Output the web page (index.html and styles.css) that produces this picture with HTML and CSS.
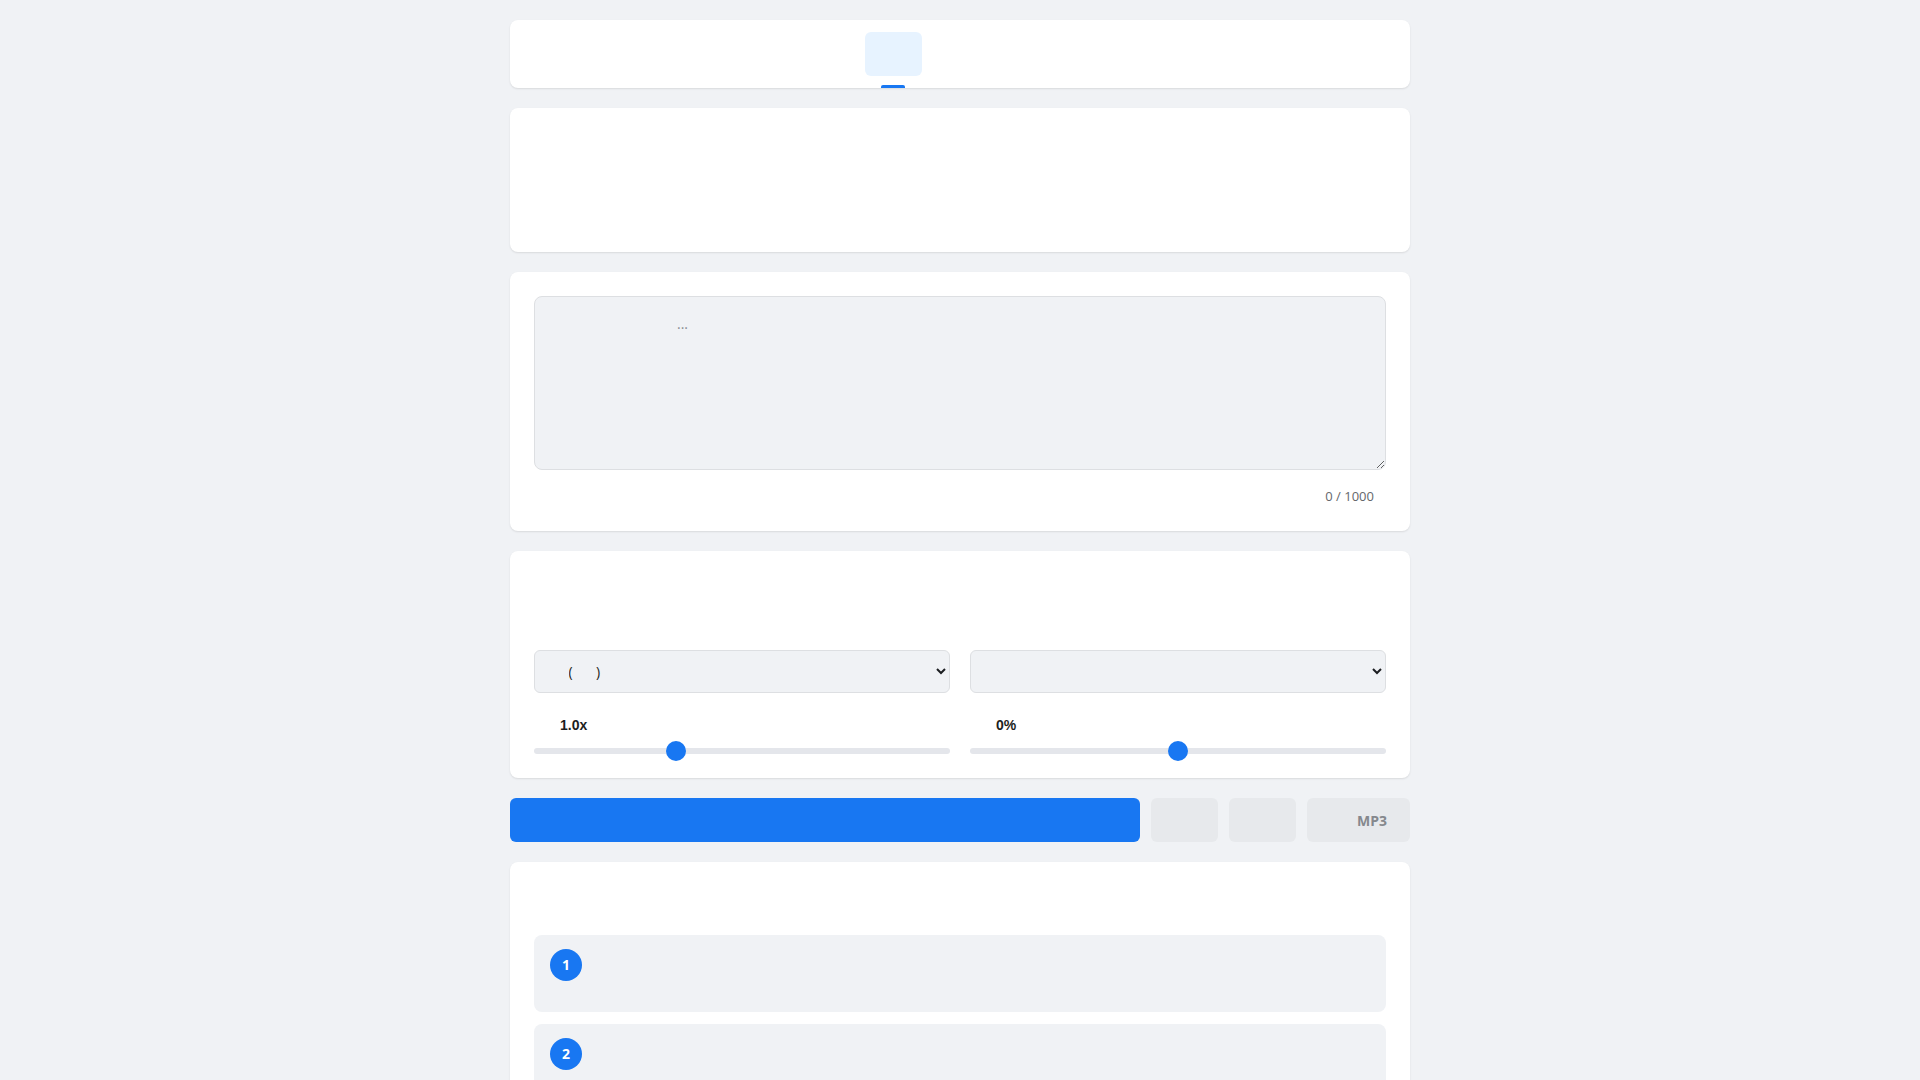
FILE: index.html
```html
<!DOCTYPE html>
<html lang="zh-CN">
<head>
    <meta charset="UTF-8">
    <meta name="viewport" content="width=device-width, initial-scale=1.0">
    <title>文字转语音</title>
    <link rel="stylesheet" href="styles.css">
</head>
<body>
    <div class="page">
        <div class="card tabs_card">
            <ul class="tabs">
                <li class="tab active"><span class="tab_box">　　</span><i class="tab_bar"></i></li>
                <li class="tab"><span class="tab_box">　　</span><i class="tab_bar"></i></li>
                <li class="tab"><span class="tab_box">　　</span><i class="tab_bar"></i></li>
            </ul>
        </div>

        <div class="card intro">
            <h2 class="title">　　　　</h2>
            <p class="desc">　　　　　　　　　　　　<br>　　　　　　　　</p>
        </div>

        <div class="card">
            <textarea class="text_input" id="textInput" maxlength="1000" placeholder="　　　　　　　　　..."></textarea>
            <div class="counter"><span id="count">0</span> / 1000</div>
        </div>

        <div class="card settings">
            <h2 class="title">　　　　</h2>
            <div class="grid">
                <div class="field">
                    <label class="field_label" for="voice">　　</label>
                    <select id="voice" class="select">
                        <option>(&emsp;&ensp;&#8198;)</option>
                    </select>
                </div>
                <div class="field">
                    <label class="field_label" for="style">　　</label>
                    <select id="style" class="select">
                        <option></option>
                    </select>
                </div>
                <div class="field">
                    <p class="range_label"><span class="range_name">　　</span><b id="rateVal">1.0x</b></p>
                    <input type="range" class="range" id="rate" min="0.5" max="2" step="0.1" value="1">
                </div>
                <div class="field">
                    <p class="range_label"><span class="range_name">　　</span><b id="pitchVal">0%</b></p>
                    <input type="range" class="range" id="pitch" min="-50" max="50" step="1" value="0">
                </div>
            </div>
        </div>

        <div class="actions">
            <button class="btn btn_primary">　　　　</button>
            <button class="btn btn_gray">　　</button>
            <button class="btn btn_gray">　　</button>
            <button class="btn btn_gray btn_mp3">　　 MP3</button>
        </div>

        <div class="card history">
            <h2 class="title">　　　　</h2>
            <ul class="steps">
                <li class="step">
                    <span class="step_num">1</span>
                    <div class="step_text">
                        <p class="step_title">　　　　</p>
                        <p class="step_desc">　　　　　　　　</p>
                    </div>
                </li>
                <li class="step">
                    <span class="step_num">2</span>
                    <div class="step_text">
                        <p class="step_title">　　　　</p>
                        <p class="step_desc">　　　　　　　　</p>
                    </div>
                </li>
                <li class="step">
                    <span class="step_num">3</span>
                    <div class="step_text">
                        <p class="step_title">　　　　</p>
                        <p class="step_desc">　　　　　　　　</p>
                    </div>
                </li>
            </ul>
        </div>
    </div>
    <script>
        {
            let text = document.querySelector('#textInput');
            let count = document.querySelector('#count');
            let rate = document.querySelector('#rate');
            let pitch = document.querySelector('#pitch');
            text.oninput = function () {
                count.innerHTML = this.value.length;
            }
            rate.oninput = function () {
                document.querySelector('#rateVal').innerHTML = Number(this.value).toFixed(1) + 'x';
            }
            pitch.oninput = function () {
                document.querySelector('#pitchVal').innerHTML = this.value + '%';
            }
        }
    </script>
</body>
</html>
```

FILE: styles.css
```css
body{
    margin: 0;
    background: #f0f2f5;
    font-family: "Open Sans", "Noto Sans", sans-serif;
    font-size: 14px;
    color: #1c1e21;
}
ul{
    list-style: none;
    margin: 0;
    padding: 0;
}
p{
    margin: 0;
}
.page{
    width: 900px;
    margin: 0 auto;
    padding: 20px 0;
}
.card{
    background: #fff;
    border-radius: 8px;
    box-shadow: 0 1px 2px rgba(0, 0, 0, 0.1);
    padding: 24px;
    margin-bottom: 20px;
}
.title{
    margin: 0 0 24px;
    font-size: 18px;
    line-height: 25px;
}

/* tabs */
.tabs_card{
    padding: 12px 24px 0;
}
.tabs{
    display: flex;
    justify-content: center;
    gap: 10px;
}
.tab{
    display: flex;
    flex-direction: column;
    align-items: center;
}
.tab_box{
    display: block;
    height: 44px;
    line-height: 44px;
    padding: 0 12.5px;
    font-size: 16px;
    border-radius: 6px;
}
.tab_bar{
    display: block;
    width: 24px;
    height: 3px;
    margin-top: 9px;
    border-radius: 2px 2px 0 0;
}
.tab.active .tab_box{
    background: #e7f3ff;
}
.tab.active .tab_bar{
    background: #1877f2;
}

.intro .title{
    margin-bottom: 23px;
}
.desc{
    line-height: 24px;
}

/* text */
.text_input{
    display: block;
    box-sizing: border-box;
    width: 100%;
    height: 174px;
    padding: 16px 16px 12px;
    border: 1px solid #dddfe2;
    border-radius: 8px;
    background: #f0f2f5;
    font-family: "Open Sans", sans-serif;
    font-size: 14px;
    line-height: 22px;
    resize: vertical;
    outline: none;
}
.text_input::placeholder{
    color: #8a8d91;
}
.counter{
    margin-top: 16px;
    padding-right: 12px;
    text-align: right;
    font-size: 13px;
    line-height: 21px;
    color: #65676b;
}

/* settings */
.grid{
    display: grid;
    grid-template-columns: 1fr 1fr;
    column-gap: 20px;
    row-gap: 22px;
}
.field_label{
    display: block;
    font-size: 13px;
    line-height: 18px;
    margin-bottom: 8px;
}
.select{
    display: block;
    width: 100%;
    height: 43px;
    padding: 0 10px 0 29.5px;
    border: 1px solid #dddfe2;
    border-radius: 6px;
    background: #f0f2f5;
    font-family: "Open Sans", sans-serif;
    font-size: 14px;
    color: #1c1e21;
}
.range_label{
    line-height: 20px;
    margin-bottom: 12px;
    font-family: "Liberation Sans", Arial, sans-serif;
}
.range_name{
    font-size: 13px;
}
.range_label b{
    font-size: 14px;
}
.range{
    -webkit-appearance: none;
    appearance: none;
    display: block;
    width: 100%;
    height: 6px;
    margin: 0;
    border-radius: 3px;
    background: #e4e6eb;
    outline: none;
}
.range::-webkit-slider-thumb{
    -webkit-appearance: none;
    width: 20px;
    height: 20px;
    border-radius: 50%;
    background: #1877f2;
    border: none;
    cursor: pointer;
}

/* buttons */
.actions{
    display: flex;
    gap: 11px;
    margin-bottom: 20px;
}
.btn{
    height: 44px;
    padding: 0 19.5px;
    border: none;
    border-radius: 6px;
    font-family: "Open Sans", sans-serif;
    font-size: 14px;
    font-weight: 700;
    cursor: pointer;
}
.btn_primary{
    flex: 1;
    background: #1877f2;
    color: #fff;
}
.btn_gray{
    background: #e7e9ec;
    color: #85888d;
}
.btn_mp3{
    padding: 0 23px 0 18.5px;
}

/* history */
.steps{
    display: flex;
    flex-direction: column;
    gap: 12px;
}
.step{
    display: flex;
    gap: 12px;
    padding: 14px 16px;
    border-radius: 8px;
    background: #f0f2f5;
}
.step_num{
    flex: none;
    width: 32px;
    height: 32px;
    line-height: 32px;
    border-radius: 50%;
    background: #1877f2;
    color: #fff;
    text-align: center;
    font-size: 14px;
    font-weight: 700;
}
.step_title{
    line-height: 22px;
    font-weight: 600;
}
.step_desc{
    margin-top: 5px;
    line-height: 22px;
    color: #65676b;
}
```
